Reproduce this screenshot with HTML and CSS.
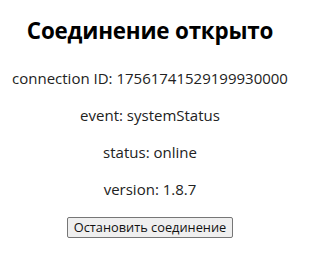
FILE: index.html
```html
<!DOCTYPE html>
<html lang="ru">
<head>
<meta charset="utf-8">
<title>Соединение</title>
<link rel="stylesheet" href="styles.css">
</head>
<body>
<main class="page">
  <h2 class="title">Соединение открыто</h2>
  <p class="line">connection ID: 17561741529199930000</p>
  <p class="line">event: systemStatus</p>
  <p class="line">status: online</p>
  <p class="line">version: 1.8.7</p>
  <div class="actions"><button class="btn" type="button">Остановить соединение</button></div>
</main>
</body>
</html>
```

FILE: styles.css
```css
html, body {
  margin: 0;
  padding: 0;
  background: #ffffff;
}
body {
  font-family: "Open Sans", "Noto Sans", "Liberation Sans", sans-serif;
  color: #1a1a1a;
}
.page {
  display: flex;
  flex-direction: column;
  align-items: center;
  padding: 15px 28px 0 8px;
  text-align: center;
}
.title {
  margin: 0 0 21px;
  font-size: 22.4px;
  line-height: 32px;
  font-weight: 700;
  color: #000;
  letter-spacing: -0.2px;
}
.line {
  margin: 0 0 16px;
  font-size: 15px;
  line-height: 21px;
  color: #222;
}
.actions {
  display: flex;
  justify-content: center;
  padding-top: 1px;
}
.btn {
  font-family: "Open Sans", "Noto Sans", "Liberation Sans", sans-serif;
  font-size: 12.8px;
  line-height: 17px;
  padding: 1px 6px;
  color: #111;
  background: #efefef;
  border: 1px solid #767676;
  border-radius: 2px;
}
```
